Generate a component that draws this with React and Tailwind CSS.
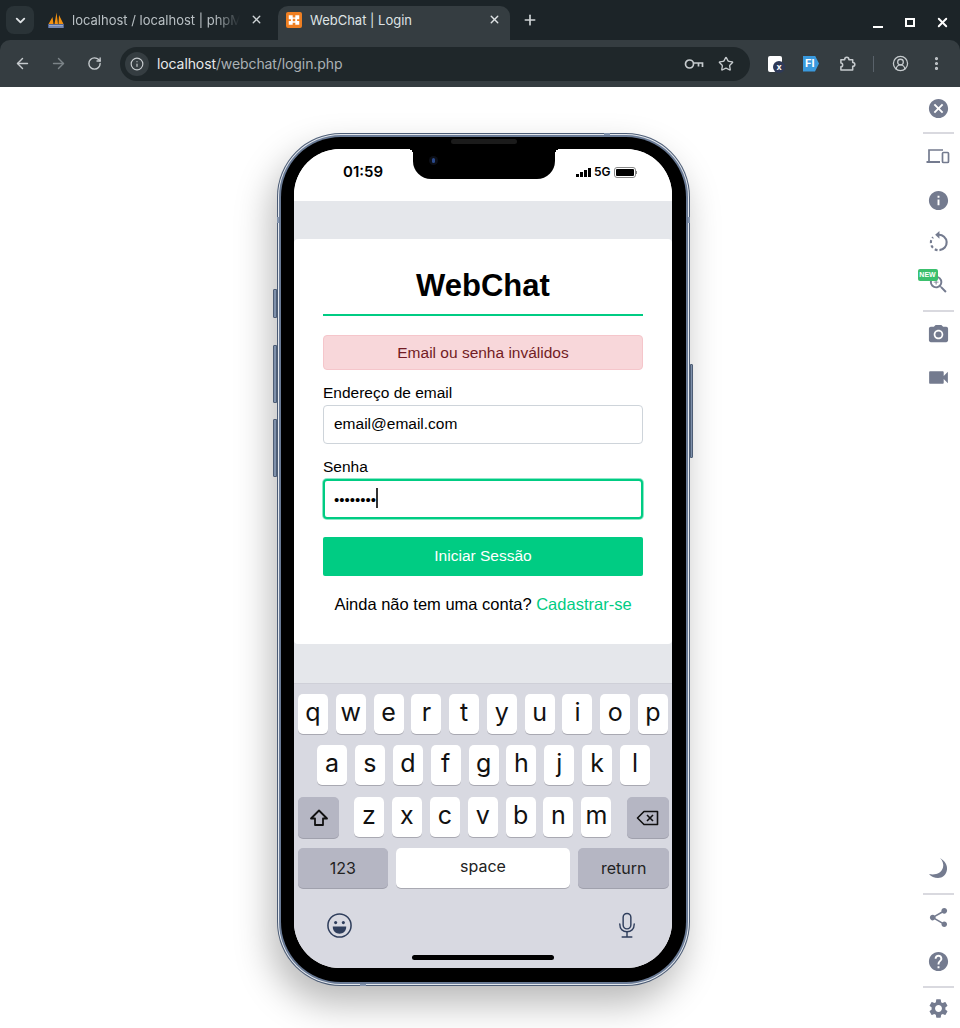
import React from 'react';
import { MdCancel, MdInfo, MdCameraAlt, MdVideocam, MdShare, MdHelp, MdSettings, MdZoomIn } from 'react-icons/md';
import { ArrowLeft, ArrowRight, RotateCw, Star, X, Plus, ChevronDown, Info, EllipsisVertical, CircleUserRound } from 'lucide-react';

const rowOne = ['q', 'w', 'e', 'r', 't', 'y', 'u', 'i', 'o', 'p'];
const rowTwo = ['a', 's', 'd', 'f', 'g', 'h', 'j', 'k', 'l'];
const rowThree = ['z', 'x', 'c', 'v', 'b', 'n', 'm'];

const Key = ({ label }) => (
  <div className="w-[30px] h-[40px] bg-white rounded-[5px] shadow-[0_1px_0_#a9a9b2] flex items-center justify-center text-[25px] leading-none pb-[3px] text-[#111]">
    {label}
  </div>
);

const Divider = () => <div className="w-[31px] h-[2px] bg-[#d9d9df] self-center" />;

const BrowserBar = () => (
  <div className="h-[87px] bg-[#1c2428] font-['Inter',sans-serif] text-[#dfe3e5]">
    <div className="h-[40px] flex items-start relative">
      <div className="mt-[6px] ml-[6px] w-[28px] h-[28px] rounded-lg bg-[#2a3337] flex items-center justify-center">
        <ChevronDown size={15} strokeWidth={3} />
      </div>
      <div className="ml-[14px] mt-[12px] w-[16px] h-[16px]">
        <svg viewBox="0 0 16 16" width="16" height="16">
          <path d="M0.5 12 L4.5 5 L5.5 12Z M6.5 12 L8.5 0.5 L10 12Z M10.5 12 L11 3 L15.5 12Z" fill="#f29111" />
          <rect x="0" y="12" width="16" height="4" fill="#4f6596" />
          <path d="M1 13.5 H15 M1 15 H15" stroke="#c9d2e6" strokeWidth="0.6" />
        </svg>
      </div>
      <div className="ml-[8px] mt-[11px] w-[168px] overflow-hidden whitespace-nowrap text-[13px] leading-[18px] text-[#b9c0c4] [mask-image:linear-gradient(to_right,black_85%,transparent)]">
        localhost / localhost | phpMyAdmin
      </div>
      <X size={13} strokeWidth={2.5} className="ml-[10px] mt-[13px] text-[#cfd4d6]" />
      <div className="ml-[15px] mt-[6px] w-[232px] h-[34px] bg-[#353d41] rounded-t-[10px] flex items-start relative">
        <div className="ml-[8px] mt-[6px] w-[16px] h-[16px] rounded-[2px] bg-[#ef7f22] flex items-center justify-center">
          <svg viewBox="0 0 16 16" width="14" height="14" fill="#fff">
            <path d="M2 2.5 H6.5 V5 H9.5 V2.5 H14 V7 H11.5 V9 H14 V13.5 H9.5 V11 H6.5 V13.5 H2 V9 H4.5 V7 H2Z" />
            <rect x="6.6" y="6.6" width="2.8" height="2.8" fill="#ef7f22" />
          </svg>
        </div>
        <span className="ml-[8px] mt-[6px] text-[13px] leading-[16px] text-[#dfe3e5]">WebChat | Login</span>
        <X size={13} strokeWidth={2.5} className="absolute right-[9px] top-[7px] text-[#dfe3e5]" />
      </div>
      <Plus size={16} strokeWidth={2.5} className="ml-[12px] mt-[12px] text-[#cfd4d6]" />
      <div className="ml-auto mt-[15px] flex items-center gap-[22px] pr-[10px]">
        <div className="w-[10px] h-[2px] bg-white mt-[8px]" />
        <div className="w-[10px] h-[9px] border-2 border-white" />
        <X size={15} strokeWidth={3} className="text-white -ml-[2px]" />
      </div>
    </div>
    <div className="h-[47px] bg-[#353d41] rounded-t-[10px] flex items-center text-[#c6cbce]">
      <ArrowLeft size={17} strokeWidth={2} className="ml-[14px]" />
      <ArrowRight size={17} strokeWidth={2} className="ml-[19px] text-[#7c8488]" />
      <RotateCw size={15} strokeWidth={2.2} className="ml-[20px]" />
      <div className="ml-[18px] w-[630px] h-[34px] rounded-full bg-[#1f272a] flex items-center">
        <div className="ml-[5px] w-[24px] h-[24px] rounded-full bg-[#353d41] flex items-center justify-center">
          <Info size={14} strokeWidth={2} />
        </div>
        <div className="ml-[8px] text-[14px] tracking-[-0.1px]">
          <span className="text-[#e8eaeb]">localhost</span>
          <span className="text-[#aab1b5]">/webchat/login.php</span>
        </div>
        <svg viewBox="0 0 20 12" width="20" height="12" fill="none" stroke="currentColor" strokeWidth="1.7" className="ml-auto">
          <circle cx="5.5" cy="6" r="4" />
          <path d="M9.5 5 H18.5 V9 M14.5 5 V8.5" />
        </svg>
        <Star size={16} strokeWidth={2} className="ml-[14px] mr-[16px]" />
      </div>
      <div className="ml-[18px] w-[14px] h-[16px] bg-white rounded-[2px] relative">
        <div className="absolute right-[-3px] bottom-[-1px] w-[12px] h-[12px] rounded-full bg-[#2f3a58] flex items-center justify-center text-white text-[9px] leading-none font-bold">x</div>
      </div>
      <div className="ml-[21px] w-[16px] h-[16px] bg-[#3a9ade] flex items-center pl-[2px] text-white text-[11px] font-bold leading-none [clip-path:polygon(0_0,75%_0,100%_50%,75%_100%,0_100%)]">FI</div>
      <svg viewBox="0 0 18 18" width="17" height="17" fill="none" stroke="currentColor" strokeWidth="1.6" strokeLinejoin="round" className="ml-[20px]">
        <path d="M2 5 H6 C6 1.5 10.5 1.5 10.5 5 H14.5 V8 C17.5 8 17.5 12 14.5 12 V16 H2 V12.5 C4.5 12.5 4.5 8.5 2 8.5Z" />
      </svg>
      <div className="ml-[17px] w-[1px] h-[16px] bg-[#59626a]" />
      <CircleUserRound size={17} strokeWidth={1.8} className="ml-[18px]" />
      <EllipsisVertical size={17} strokeWidth={2.5} className="ml-[19px]" />
    </div>
  </div>
);

const LoginForm = () => (
  <div className="flex-1 bg-[#e5e7eb] pt-[38px] font-['Liberation_Sans',sans-serif] text-black">
    <div className="h-[405px] bg-white rounded-[4px] px-[29px] pt-[27px] w-[378px]">
      <h1 className="text-[31px] leading-[40px] font-bold text-center">WebChat</h1>
      <div className="h-[2px] bg-[#00cc83] mt-[8px]" />
      <div className="mt-[19px] h-[35px] rounded-[4px] bg-[#f8d7da] border border-[#f5c6cb] text-[#721c24] text-[15.5px] flex items-center justify-center">
        Email ou senha inválidos
      </div>
      <label className="block mt-[14px] text-[15.5px] leading-[18px]">Endereço de email</label>
      <input
        readOnly
        value="email@email.com"
        className="block w-full mt-[3px] h-[39px] px-[10px] pb-[2px] bg-white border border-[#ced4da] rounded-[4px] text-[15.5px] text-black outline-none"
      />
      <label className="block mt-[14px] text-[15.5px] leading-[18px]">Senha</label>
      <div className="relative mt-[3px]">
        <input
          readOnly
          type="password"
          value="12345678"
          className="block w-full h-[40px] pl-[9px] bg-white border-2 border-[#00cc83] rounded-[4px] shadow-[0_0_0_1px_rgba(0,204,131,0.45)] text-[15px] text-black outline-none"
        />
        <div className="absolute left-[53px] top-[9px] w-[1.5px] h-[20px] bg-[#333]" />
      </div>
      <button className="block w-full mt-[18px] h-[39px] pb-[2px] bg-[#00cc83] text-white text-[15.5px] rounded-[2px]">
        Iniciar Sessão
      </button>
      <p className="mt-[18px] text-[16.5px] leading-[20px] text-center whitespace-nowrap">
        Ainda não tem uma conta? <span className="text-[#00cc83]">Cadastrar-se</span>
      </p>
    </div>
  </div>
);

const Keyboard = () => (
  <div className="h-[285px] bg-[#d8d9e1] border-t border-[#cfd0d8] pt-[10px] px-[4px] font-['Inter',sans-serif] relative">
    <div className="flex gap-[7.8px]">
      {rowOne.map(k => <Key key={k} label={k} />)}
    </div>
    <div className="flex gap-[7.9px] mt-[11px] pl-[19px]">
      {rowTwo.map(k => <Key key={k} label={k} />)}
    </div>
    <div className="flex mt-[12px] items-start">
      <div className="w-[41px] h-[41px] bg-[#b5b6c3] rounded-[5px] shadow-[0_1px_0_#a0a1ad] flex items-center justify-center">
        <svg viewBox="0 0 20 20" width="20" height="20" fill="none" stroke="#111" strokeWidth="1.8" strokeLinejoin="round">
          <path d="M10 2.5 L18 10.5 H14 V17 H6 V10.5 H2 Z" />
        </svg>
      </div>
      <div className="flex gap-[7.9px] ml-[15px]">
        {rowThree.map(k => <Key key={k} label={k} />)}
      </div>
      <div className="ml-auto mr-[-1px] w-[42px] h-[41px] bg-[#b5b6c3] rounded-[5px] shadow-[0_1px_0_#a0a1ad] flex items-center justify-center">
        <svg viewBox="0 0 24 20" width="24" height="20" fill="none" stroke="#111" strokeWidth="1.6" strokeLinejoin="round">
          <path d="M8 3.5 H21.5 V16.5 H8 L1.5 10 Z" />
          <path d="M11 7 L17 13 M17 7 L11 13" />
        </svg>
      </div>
    </div>
    <div className="flex gap-[8px] mt-[10px] text-[16px] text-[#222]">
      <div className="w-[90px] h-[40px] bg-[#b5b6c3] rounded-[5px] shadow-[0_1px_0_#a0a1ad] flex items-center justify-center">123</div>
      <div className="w-[175px] h-[40px] bg-white rounded-[5px] shadow-[0_1px_0_#a9a9b2] flex items-center justify-center pb-[4px]">space</div>
      <div className="w-[91px] mr-[-1px] grow h-[40px] bg-[#b5b6c3] rounded-[5px] shadow-[0_1px_0_#a0a1ad] flex items-center justify-center">return</div>
    </div>
    <div className="flex justify-between mt-[24px] pl-[28px] pr-[31px] text-[#2f3e5c]">
      <svg viewBox="0 0 28 28" width="27" height="27" fill="none" stroke="currentColor" strokeWidth="1.6">
        <circle cx="14" cy="14" r="12" />
        <circle cx="10" cy="11" r="1.6" fill="currentColor" stroke="none" />
        <circle cx="18" cy="11" r="1.6" fill="currentColor" stroke="none" />
        <path d="M7 15 H21 C21 20 17.5 22.5 14 22.5 C10.5 22.5 7 20 7 15Z" fill="currentColor" stroke="none" />
      </svg>
      <svg viewBox="0 0 20 28" width="20" height="27" fill="none" stroke="currentColor" strokeWidth="1.5" strokeLinecap="round">
        <rect x="6" y="1.5" width="8" height="16" rx="4" />
        <path d="M2.5 12.5 C2.5 18 6 20.5 10 20.5 C14 20.5 17.5 18 17.5 12.5" />
        <path d="M10 20.5 V26 M5 26 H15" />
      </svg>
    </div>
    <div className="absolute left-[118px] top-[271px] w-[142px] h-[5px] rounded-full bg-black" />
  </div>
);

const Phone = () => (
  <div className="relative w-[413px] h-[853px] rounded-[64px] bg-[#4c5c75] p-[1px] shadow-[-6px_18px_36px_rgba(0,0,0,0.28)]">
    <div className="absolute left-[-4px] top-[156px] w-[4px] h-[29px] bg-[#7e90ab] border border-[#4d5d75] rounded-l-[1px]" />
    <div className="absolute left-[-4px] top-[212px] w-[4px] h-[58px] bg-[#7e90ab] border border-[#4d5d75] rounded-l-[1px]" />
    <div className="absolute left-[-4px] top-[286px] w-[4px] h-[58px] bg-[#7e90ab] border border-[#4d5d75] rounded-l-[1px]" />
    <div className="absolute right-[-3px] top-[231px] w-[3px] h-[94px] bg-[#7e90ab] border border-[#4d5d75] rounded-r-[1px]" />
    <div className="h-full rounded-[63px] bg-[#e4e8ee] p-[1px]">
      <div className="h-full rounded-[62px] bg-[#6a7b96] p-[2px]">
        <div className="h-full rounded-[60px] bg-black pl-[13px] pr-[14px] pt-[12px] pb-[14px]">
          <div className="relative h-[819px] rounded-[46px] overflow-hidden bg-white flex flex-col">
            <div className="h-[52px] bg-white flex items-start justify-between font-['Inter',sans-serif] text-black pl-[49px]">
              <span className="mt-[14px] text-[15px] leading-[18px] font-semibold">01:59</span>
              <div className="mt-[14px] flex items-center w-[96px] h-[18px]">
                <div className="flex items-end gap-[1px] h-[9px]">
                  <div className="w-[3px] h-[3px] bg-black" />
                  <div className="w-[3px] h-[5px] bg-black" />
                  <div className="w-[3px] h-[7px] bg-black" />
                  <div className="w-[3px] h-[9px] bg-black" />
                </div>
                <span className="ml-[3px] text-[12px] font-semibold leading-none">5G</span>
                <div className="ml-[3px] w-[22px] h-[11px] border border-[#888] rounded-[3px] p-[1px]">
                  <div className="h-full bg-black rounded-[1px]" />
                </div>
                <div className="w-[1px] h-[3px] bg-[#888]" />
              </div>
            </div>
            <LoginForm />
            <Keyboard />
            <div className="absolute left-[119px] top-0 w-[142px] h-[30px] bg-black rounded-b-[18px]">
              <div className="absolute left-[-5px] top-0 w-[5px] h-[5px] bg-[radial-gradient(circle_at_0_100%,transparent_5px,black_5px)]" />
              <div className="absolute right-[-5px] top-0 w-[5px] h-[5px] bg-[radial-gradient(circle_at_100%_100%,transparent_5px,black_5px)]" />
              <div className="absolute left-[16px] top-[7px] w-[9px] h-[9px] rounded-full bg-[#0c0f17] flex items-center justify-center">
                <div className="w-[3px] h-[5px] rounded-full bg-[#2b4a8c]" />
              </div>
            </div>
          </div>
        </div>
      </div>
    </div>
    <div className="absolute left-[174px] top-[6px] w-[66px] h-[5px] rounded-full bg-[#1b1b1b]" />
    <div className="absolute left-[327px] top-0 w-[6px] h-[2px] bg-[#8494ad]" />
    <div className="absolute left-[83px] bottom-0 w-[6px] h-[2px] bg-[#8494ad]" />
    <div className="absolute left-0 top-[84px] w-[2px] h-[6px] bg-[#8494ad]" />
    <div className="absolute right-0 top-[84px] w-[2px] h-[6px] bg-[#8494ad]" />
  </div>
);

const SideBar = () => (
  <div className="w-[44px] h-[941px] shrink-0 flex flex-col items-center text-[#747b8f] pt-[10px] pb-[8px]">
    <MdCancel size={23} />
    <div className="mt-[12px]"><Divider /></div>
    <svg viewBox="0 0 24 24" width="24" height="24" className="mt-[10px]" fill="none" stroke="currentColor" strokeWidth="1.7">
      <path d="M3 17 V6 H17" />
      <path d="M0.5 18 H14" strokeWidth="2" />
      <rect x="16.5" y="8.5" width="6" height="10" rx="1" />
    </svg>
    <MdInfo size={23} className="mt-[21px]" />
    <svg viewBox="0 0 24 24" width="23" height="23" className="mt-[18px]" fill="none" stroke="currentColor" strokeWidth="2.2">
      <path d="M12 5 A8 8 0 0 1 13 21" />
      <path d="M11 21 A8 8 0 0 1 6.3 7.5" strokeDasharray="3 2.4" />
      <path d="M13 1 L8.5 5 L13 9" fill="currentColor" stroke="none" />
    </svg>
    <div className="relative mt-[20px]">
      <MdZoomIn size={23} />
      <div className="absolute left-[-9px] top-[-4px] w-[20px] h-[12px] rounded-[2px] bg-[#3cc06e] text-white text-[7px] font-bold font-['Liberation_Sans',sans-serif] flex items-center justify-center">
        NEW
      </div>
    </div>
    <div className="mt-[14px]"><Divider /></div>
    <MdCameraAlt size={23} className="mt-[11px]" />
    <MdVideocam size={25} className="mt-[19px]" />
    <svg viewBox="0 0 24 24" width="24" height="24" className="mt-auto" fill="currentColor">
      <path d="M14 2 C19 5 21.5 9 21 13.5 C20.5 18.5 16.5 22 12 22 C8.5 22 5 20.5 3 18 C9.5 19.5 15.5 17 17 11.5 C18 8 16.5 4.5 14 2Z" />
    </svg>
    <div className="mt-[13px]"><Divider /></div>
    <MdShare size={23} className="mt-[11px]" />
    <MdHelp size={23} className="mt-[21px]" />
    <div className="mt-[13px]"><Divider /></div>
    <MdSettings size={23} className="mt-[9px]" />
  </div>
);

export default function App() {
  return (
    <div className="w-[960px] h-[1028px] overflow-hidden bg-white flex flex-col">
      <BrowserBar />
      <div className="flex justify-between flex-1">
        <div className="pl-[277px] pt-[46px]">
          <Phone />
        </div>
        <SideBar />
      </div>
    </div>
  );
}
